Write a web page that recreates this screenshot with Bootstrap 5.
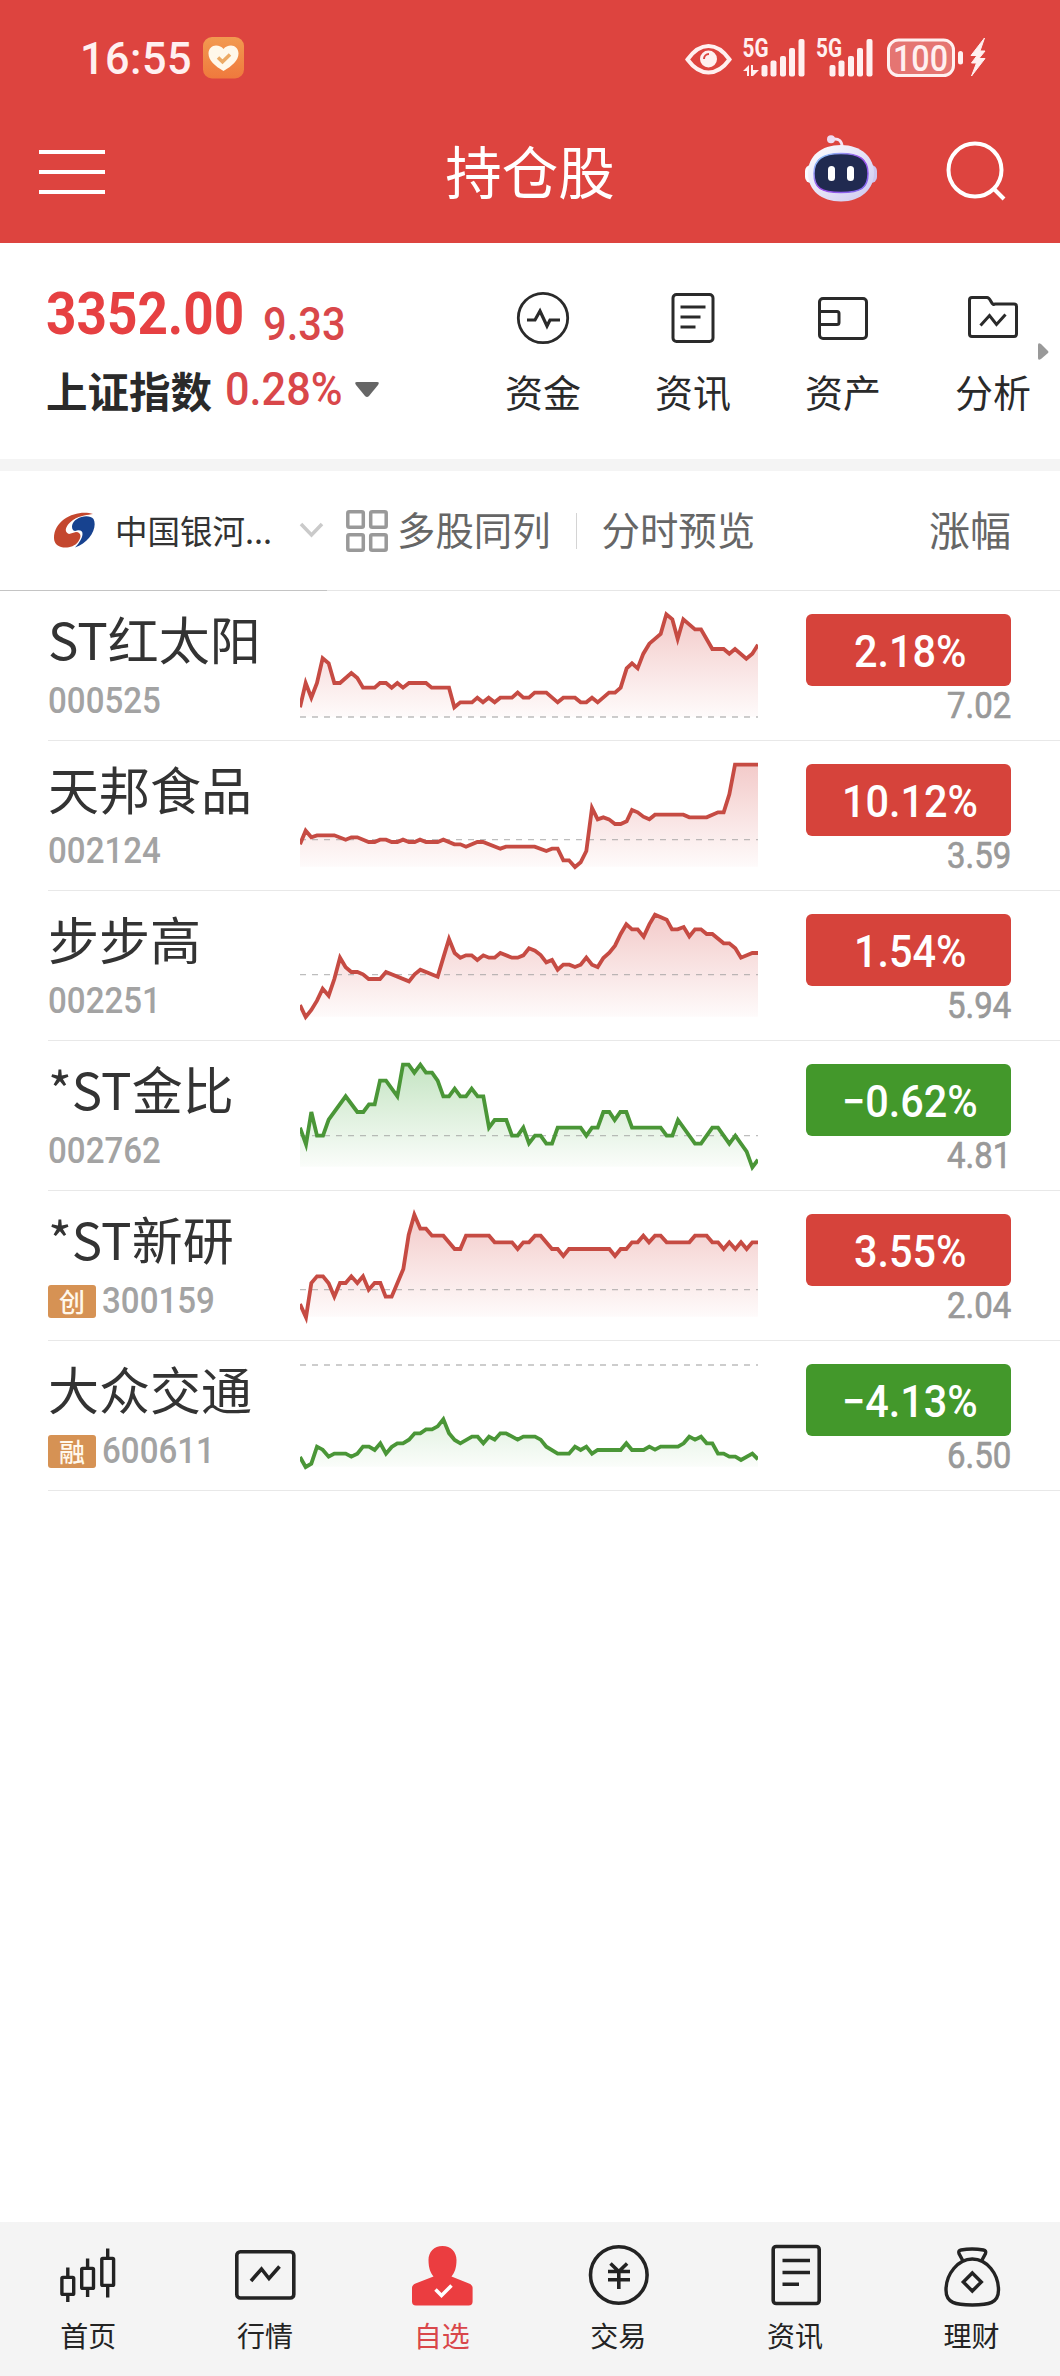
<!DOCTYPE html>
<html lang="zh-CN">
<head>
<meta charset="utf-8">
<meta name="viewport" content="width=device-width, initial-scale=1">
<title>持仓股</title>
<link href="https://cdn.jsdelivr.net/npm/bootstrap@5.3.0/dist/css/bootstrap.min.css" rel="stylesheet">
<style>
body{font-family:"Noto Sans CJK SC",sans-serif;color:#2a2a2a;background:#fff;min-height:2376px;overflow-x:hidden}
svg{display:block;flex:none}
.din{font-family:Roboto,sans-serif;font-weight:500;display:inline-block;white-space:nowrap;transform:scaleX(.92);transform-origin:left center}
.topbar{background:#dd443f;height:243px;color:#fff}
.status{height:116px;padding:0 74px 0 80px;color:#fff0f0}
.clock{font-size:45px;line-height:60px;width:123px;transform:scaleX(.96);letter-spacing:.5px}
.titlebar{height:112px;padding:0 54px 0 39px}
.title-text{font-size:56.5px;line-height:80px;font-weight:400;margin:-6px 0 0 15px}
.side{width:220px}
.quote{height:216px;padding-left:46px}
.idx-main{font-size:60px;line-height:64px;font-weight:700;color:#e64042;width:217px;transform:scaleX(.885)}
.idx-sub{font-size:45.5px;line-height:50px;color:#d9474a;transform:scaleX(.915)}
.idx-pct{width:130px;transform:scaleX(.95)}
.idx-name{font-size:41.5px;line-height:56px;font-weight:700;width:179px}
.shortcut{width:150px;padding-top:48px}
.shortcut span{font-size:38px;line-height:50px;margin-top:15px}
.more{width:12px;margin-left:-30px;padding-top:99px}
.band{height:12px;background:#f4f4f4}
.filter{height:120px;border-bottom:1px solid #e6e6e6;color:#666;font-size:38.4px}
.filter .opt{margin-top:-3px}
.broker{width:327px;height:120px;border-bottom:1px solid #c4c4c4;color:#333;font-size:32.5px;padding-left:54px}
.sep{width:1px;height:36px;background:#d4d4d4;margin:0 25px 0 25px}
.stock{height:150px;margin-left:48px;border-bottom:1px solid #e8e8e8}
.who{width:252px;padding-top:17px}
.sname{font-size:51px;line-height:60px;color:#333;white-space:nowrap}
.code{font-size:37px;line-height:38px;color:#a3a3a3;transform:scaleX(.895)}
.codeline{margin-top:14px;height:38px}
.tagbox{width:48px;height:33px;background:#d69254;border-radius:3px;color:#fff8ec;font-size:26px;line-height:31px;font-weight:500;text-align:center;margin-right:6px}
.result{width:205px;margin-left:48px;padding-top:23px}
.pct{height:72px;border-radius:6px;background:#d6433b;color:#fff;font-size:45px;line-height:67px;text-align:center;padding-left:3px}
.pct.down{background:#43982b}
.pct .din{transform-origin:center}
.price{font-size:37px;line-height:38px;color:#999;text-align:right;margin-top:-3px}
.price .din{transform:scaleX(.89);transform-origin:right center;font-weight:400;-webkit-text-stroke:.7px #999}
.tabs{height:154px;background:#f4f4f4;padding-top:18px}
.tabs a{color:#232323;text-decoration:none;font-size:28px;line-height:36px}
.tabs a.on{color:#d9474a}
.tabs span{margin-top:7px}
</style>
<script src="https://cdn.jsdelivr.net/npm/bootstrap@5.3.0/dist/js/bootstrap.bundle.min.js"></script>
</head>
<body class="d-flex flex-column">
<header class="topbar">
  <div class="status d-flex justify-content-between">
    <div class="d-flex align-items-start" style="padding-top:29px">
      <span class="din clock">16:55</span>
      <svg width="41" height="42" viewBox="0 0 41 42" style="margin-top:8px"><defs><linearGradient id="og" x2="0" y2="1"><stop stop-color="#f29a50"/><stop offset="1" stop-color="#ef793d"/></linearGradient></defs><rect width="41" height="41.500" rx="9" fill="url(#og)"/><path d="M20.500 34C12 29 5.500 23.500 5.500 16.500C5.500 11.500 9 8.500 13 8.500C16 8.500 19 9.800 20.500 12C22 9.800 25 8.500 28 8.500C32 8.500 35.500 11.500 35.500 16.500C35.500 23.500 29 29 20.500 34Z" fill="#fff8ea"/><path d="M15 20.500l4.500 4.300 7.500-7.300" fill="none" stroke="#ecaa65" stroke-width="3.500"/></svg>
    </div>
    <svg width="301" height="54" viewBox="685 27 301 54" fill="#fff0f0" style="margin-top:27px">
      <path d="M687.500 59.500Q697 46 708.500 46T729.500 59.500Q720 72.500 708.500 72.500T687.500 59.500Z" fill="none" stroke="#fff0f0" stroke-width="4"/><circle cx="708.500" cy="59" r="8.500"/><path d="M704 59a5 5 0 0 1 5-5" stroke="#dd443f" stroke-width="2" fill="none"/>
      <g font-family="Roboto,sans-serif" font-weight="700" font-size="25"><text x="742.500" y="57" textLength="26" lengthAdjust="spacingAndGlyphs">5G</text><text x="816" y="57" textLength="26" lengthAdjust="spacingAndGlyphs">5G</text></g>
      <path d="M743 71l6-6v11h-2v-5zM751 65h2v5h6l-6 6h-2z"/>
      <g id="bars"><rect x="761.500" y="65" width="6" height="11.500" rx="2"/><rect x="770.500" y="60.500" width="6" height="16" rx="2"/><rect x="780" y="56" width="6" height="20.500" rx="2"/><rect x="789" y="48" width="6" height="28.500" rx="2"/><rect x="798.500" y="39" width="6" height="37.500" rx="2"/></g>
      <use href="#bars" x="68"/>
      <rect x="888.500" y="40" width="65" height="35.500" rx="10" fill="#e57572" stroke="#fff0f0" stroke-width="3"/>
      <text x="893" y="70.500" font-family="Roboto,sans-serif" font-weight="500" font-size="36" textLength="55" lengthAdjust="spacingAndGlyphs">100</text>
      <rect x="958" y="51" width="5" height="13.500" rx="2.500"/><path d="M984.500 38L971 55.500h6L971.500 63h5L971.500 76 985 58.500h-6l6-7.500h-5z" stroke="#fff0f0" stroke-width="1"/>
    </svg>
  </div>
  <div class="titlebar d-flex justify-content-between align-items-center">
    <div class="side"><svg width="66" height="44" fill="#fff"><rect width="66" height="4"/><rect y="20" width="66" height="4"/><rect y="40" width="66" height="4"/></svg></div>
    <div class="title-text">持仓股</div>
    <div class="side d-flex justify-content-between align-items-start" style="padding-left:19px;margin-top:-7px">
      <svg width="72" height="67" viewBox="0 0 72 67"><defs><linearGradient id="rb" x2="1" y2="1"><stop stop-color="#fff"/><stop offset="1" stop-color="#ccc7f0"/></linearGradient><linearGradient id="rv" x2="1" y2="1"><stop stop-color="#8adfff"/><stop offset=".5" stop-color="#9d4be8"/><stop offset="1" stop-color="#7c6ff0"/></linearGradient></defs><path d="M28 4q9-1 9 8" fill="none" stroke="#f6e4f4" stroke-width="3"/><circle cx="26" cy="4.200" r="4" fill="#eedcf2"/><rect y="30" width="12" height="18" rx="6" fill="#fafaff"/><rect x="60" y="30" width="12" height="18" rx="6" fill="#cdc5ee"/><path d="M36 10C56 10 69 22 69 38S56 66.500 36 66.500 3 55 3 38 16 10 36 10Z" fill="url(#rb)"/><path d="M36 18.500C54 18.500 63 24 63 38.500S56 57.500 36 57.500 9 53 9 38.500 18 18.500 36 18.500Z" fill="#202a50" stroke="url(#rv)" stroke-width="1.500"/><rect x="23" y="31" width="7" height="15" rx="3.500" fill="#fff"/><rect x="42" y="31" width="7" height="15" rx="3.500" fill="#fff"/></svg>
      <svg width="60" height="62" viewBox="0 0 60 62" fill="none" stroke="#fff" stroke-width="4" style="margin-top:4px"><circle cx="29" cy="31" r="26.500"/><path d="M47 49l11 11"/></svg>
    </div>
  </div>
</header>

<section class="quote d-flex">
  <div style="width:422px;padding-top:39px">
    <div class="d-flex align-items-end"><span class="din idx-main">3352.00</span><span class="din idx-sub" style="margin-bottom:-4px">9.33</span></div>
    <div class="d-flex align-items-center" style="margin-top:16px"><span class="idx-name">上证指数</span><span class="din idx-sub idx-pct">0.28%</span><svg width="24" height="16" fill="#666"><path d="M2 0h20q3 0 1 3L14 14q-2 2-4 0L1 3Q-1 0 2 0z"/></svg></div>
  </div>
  <div class="shortcut flex-shrink-0 d-flex flex-column align-items-center">
    <svg width="60" height="60" viewBox="0 0 60 60" fill="none" stroke="#2a2a2a" stroke-width="2.800"><circle cx="30" cy="27" r="24.700"/><path d="M14 29h8l5-9 7 15 3-6h10" stroke-width="3.200"/></svg><span>资金</span></div>
  <div class="shortcut flex-shrink-0 d-flex flex-column align-items-center">
    <svg width="60" height="60" viewBox="0 0 60 60" fill="none" stroke="#2a2a2a" stroke-width="3"><rect x="10" y="3.500" width="40" height="47" rx="3.500"/><path d="M17.500 16h25M17.500 26h20M17.500 36h15"/></svg><span>资讯</span></div>
  <div class="shortcut flex-shrink-0 d-flex flex-column align-items-center">
    <svg width="60" height="60" viewBox="0 0 60 60" fill="none" stroke="#2a2a2a" stroke-width="3"><rect x="6.500" y="7.500" width="47" height="40" rx="3.500"/><path d="M6.500 20.500H24q2 0 2 2v9q0 2-2 2H6.500"/></svg><span>资产</span></div>
  <div class="shortcut flex-shrink-0 d-flex flex-column align-items-center">
    <svg width="60" height="60" viewBox="0 0 60 60" fill="none" stroke="#2a2a2a" stroke-width="3"><path d="M9 6.500H24q2 0 4 4t4 2.500H51q2.500 0 2.500 2.500V43q0 2.500-2.500 2.500H9Q6.500 45.500 6.500 43V9Q6.500 6.500 9 6.500z"/><path d="M17.500 34.500l9-10 7 9 9-10" /></svg><span>分析</span></div>
  <div class="more flex-shrink-0"><svg width="11" height="20" fill="#999"><path d="M0 3Q0 0 3 2l7 7q1 1 0 2l-7 6q-3 2-3-1z"/></svg></div>
</section>
<div class="band"></div>

<section class="filter d-flex align-items-center">
  <div class="broker flex-shrink-0 d-flex align-items-center">
    <svg width="42" height="36" viewBox="0 0 42 36"><path d="M39 2C25-3 0 6 0 26C0 38 18 38 24 30C28 25 27 20 22 20L15 22C9 20 12 13 19 8C27 3 34 3 39 2Z" fill="#c4472e"/><path d="M18 14C19 5 35 1 39.500 7C44 16 35 31 21 35.500C29 27 32 17 23 18.500C19 20 18 17 18 14Z" fill="#17428f"/></svg>
    <span style="margin-left:19px;width:184px">中国银河...</span>
    <svg width="25" height="18" fill="none" stroke="#cacaca" stroke-width="3.500"><path d="M2 3l10.500 11L23 3"/></svg>
  </div>
  <svg width="42" height="42" viewBox="0 0 42 42" fill="none" stroke="#999" stroke-width="3.500" style="margin-left:19px"><rect x="1.800" y="1.800" width="15.500" height="15.500" rx="1.500"/><rect x="24.700" y="1.800" width="15.500" height="15.500" rx="1.500"/><rect x="1.800" y="24.700" width="15.500" height="15.500" rx="1.500"/><rect x="24.700" y="24.700" width="15.500" height="15.500" rx="1.500"/></svg>
  <span class="opt" style="margin-left:9px">多股同列</span><i class="sep"></i><span class="opt">分时预览</span>
  <span class="opt ms-auto" style="margin-right:49px;font-size:41px">涨幅</span>
</section>

<main id="list" class="flex-grow-1"></main>

<nav class="tabs d-flex">
  <a href="#" class="col-2 d-flex flex-column align-items-center"><svg width="80" height="70" fill="none" stroke="#232323" stroke-width="3.400"><rect x="13.900" y="37.400" width="11.800" height="17" rx="1"/><rect x="33.700" y="28.400" width="11.800" height="20" rx="1"/><rect x="53.800" y="18.400" width="11.800" height="27" rx="1"/><path d="M19.800 27.500v10M19.800 55v7M39.600 18.500v10M39.600 49v8M59.700 8.500v10M59.700 46v11.500"/></svg><span>首页</span></a>
  <a href="#" class="col-2 d-flex flex-column align-items-center"><svg width="80" height="70" fill="none" stroke="#232323" stroke-width="3.600"><rect x="11.800" y="11.800" width="57" height="46.200" rx="3.500"/><path d="M26 41l10.500-12 7.500 9.500 10.500-12"/></svg><span>行情</span></a>
  <a href="#" class="on col-2 d-flex flex-column align-items-center"><svg width="80" height="70"><path d="M40.500 6C49 6 54.500 12 54.500 20C54.500 28 52.500 33 49.500 36.500L67 43.500Q70.600 45 70.600 48V61.500Q70.600 65.500 66.600 65.500H14Q10 65.500 10 61.500V48Q10 45 13.500 43.500L31.500 36.500C28.500 33 26.500 28 26.500 20C26.500 12 32 6 40.500 6Z" fill="#eb3d40"/><path d="M33.500 49.500l6 6L49.500 45.500" fill="none" stroke="#fff" stroke-width="3.500"/></svg><span>自选</span></a>
  <a href="#" class="col-2 d-flex flex-column align-items-center"><svg width="80" height="70" fill="none" stroke="#232323" stroke-width="3.600"><circle cx="40.800" cy="35" r="28.300"/><path d="M32.500 23.500l8.300 8 8.300-8M30 31.500h22M30 39.700h22M40.800 31v18"/></svg><span>交易</span></a>
  <a href="#" class="col-2 d-flex flex-column align-items-center"><svg width="80" height="70" fill="none" stroke="#232323" stroke-width="3.600"><rect x="18.200" y="6.500" width="46" height="57" rx="3"/><path d="M27.500 20.500H55M27.500 32.500H55M27.500 44.300H44"/></svg><span>资讯</span></a>
  <a href="#" class="col-2 d-flex flex-column align-items-center"><svg width="80" height="70" fill="none" stroke="#232323" stroke-width="3.400"><path d="M40.300 19C55 19 66.500 34 66.500 50C66.500 63 57 65 40.300 65S14 63 14 50C14 34 26 19 40.300 19Z"/><path d="M31 21l-4-7.500q-1-3 2-3.500 11-2 22.500 0 3 .5 2 3.500L49.500 21"/><path d="M40.300 33l9 9-9 9-9-9z"/></svg><span>理财</span></a>
</nav>

<script>
// x,y pairs of each intraday line, in thirds of a pixel
const stocks=[
 {n:"ST红太阳",c:"000525",p:"2.18%",v:"7.02",d:381,l:"60,352 77,279 94,323 111,279 128,205 146,220 163,279 180,279 214,249 232,264 249,293 284,293 300,279 318,279 335,293 352,279 369,293 387,279 438,279 455,293 507,293 523,352 541,337 576,337 592,323 609,337 626,323 644,337 661,323 696,323 713,308 730,323 747,323 764,308 799,308 833,337 850,323 885,323 902,337 919,337 936,323 953,337 987,308 1005,308 1022,293 1040,235 1056,220 1073,235 1090,191 1108,161 1142,132 1159,73 1177,88 1193,147 1210,88 1245,118 1263,118 1297,177 1331,177 1348,191 1365,177 1399,206 1417,191 1434,164"},
 {n:"天邦食品",c:"002124",p:"10.12%",v:"3.59",d:299,l:"60,313 77,272 94,292 111,286 163,286 197,299 214,292 232,292 266,306 284,306 300,299 318,299 335,306 352,306 369,299 387,306 404,306 420,299 438,306 473,306 490,299 523,313 541,313 558,320 592,306 609,306 661,326 678,320 764,320 799,333 816,326 833,326 850,361 867,361 885,381 902,367 919,333 936,204 953,238 970,232 987,238 1005,252 1022,252 1040,244 1056,210 1073,217 1090,230 1108,238 1125,224 1210,224 1228,232 1280,232 1314,217 1331,217 1348,163 1365,74 1434,74"},
 {n:"步步高",c:"002251",p:"1.54%",v:"5.94",d:254,l:"60,345 77,381 94,360 111,332 128,296 146,317 163,267 180,203 197,232 214,246 232,246 249,253 266,267 300,267 318,246 387,274 404,253 421,239 473,260 490,203 507,147 524,189 541,203 558,196 575,196 592,210 610,196 627,203 644,203 661,189 696,203 713,203 730,196 747,175 765,182 782,195 799,217 816,210 833,239 850,224 868,224 885,231 902,224 919,203 936,224 953,231 970,204 988,188 1005,167 1022,132 1039,103 1056,118 1073,118 1091,140 1108,103 1125,74 1160,89 1176,118 1193,118 1211,111 1228,139 1245,118 1263,118 1280,132 1297,132 1331,160 1348,160 1366,175 1383,203 1417,189 1434,189"},
 {n:"*ST金比",c:"002762",p:"−0.62%",v:"4.81",g:1,d:287,l:"60,263 78,313 94,216 111,287 129,287 146,239 197,169 232,216 250,216 267,193 284,193 300,122 318,122 352,169 369,74 386,74 403,98 421,74 438,98 456,98 473,122 490,169 507,169 524,146 541,169 558,169 575,146 593,169 610,169 627,263 644,240 679,240 696,287 713,287 730,263 747,310 765,287 782,287 799,311 816,311 833,263 902,263 919,287 936,263 953,263 970,216 988,216 1004,240 1021,216 1039,216 1056,263 1142,263 1160,287 1177,287 1194,240 1245,311 1263,311 1297,263 1314,263 1348,311 1366,287 1400,335 1417,382 1434,359"},
 {n:"*ST新研",c:"300159",t:"创",p:"3.55%",v:"2.04",d:299,l:"60,342 78,382 94,279 111,259 129,259 146,280 163,320 180,279 197,279 214,259 232,279 249,259 266,299 284,279 301,279 317,320 335,320 370,237 386,135 403,74 421,116 438,116 456,137 490,137 524,177 541,177 558,137 627,137 644,157 696,157 713,177 730,157 747,157 765,137 782,137 816,177 833,177 850,198 867,177 988,177 1005,198 1022,177 1039,177 1056,157 1073,157 1090,137 1107,157 1125,137 1142,137 1160,157 1228,157 1245,137 1280,137 1297,157 1314,157 1331,177 1348,157 1366,177 1383,157 1400,177 1417,157 1434,157"},
 {n:"大众交通",c:"600611",t:"融",p:"−4.13%",v:"6.50",g:1,d:75,l:"60,351 77,381 94,371 111,320 128,329 146,350 163,341 197,341 214,350 232,341 249,320 267,320 284,330 301,310 318,341 335,321 352,310 369,310 387,299 404,280 421,280 438,268 456,268 473,259 490,238 507,280 524,300 541,310 576,290 593,290 610,310 627,290 644,299 661,280 678,280 713,299 730,290 765,290 782,299 799,320 833,341 867,341 885,320 902,330 919,320 936,341 953,330 1022,330 1039,310 1056,330 1091,330 1108,320 1125,329 1142,320 1194,320 1211,310 1228,290 1245,299 1263,290 1280,310 1297,310 1314,341 1331,341 1348,350 1366,350 1383,360 1417,341 1434,358"}
];
document.getElementById("list").innerHTML=stocks.map((s,i)=>{
 const col=s.g?"#4a9637":"#c64b43", f=s.g?"#8cca88":"#e79694";
 return `<div class="stock d-flex"><div class="who flex-shrink-0"><div class="sname">${s.n}</div>
 <div class="codeline d-flex align-items-center">${s.t?`<span class="tagbox">${s.t}</span>`:""}<span class="din code">${s.c}</span></div></div>
 <svg width="458" height="149" viewBox="60 3 1374 447"><defs><linearGradient id="g${i}" gradientUnits="userSpaceOnUse" x1="0" x2="0" y1="74" y2="381"><stop stop-color="${f}" stop-opacity=".5"/><stop offset="1" stop-color="${f}" stop-opacity=".04"/></linearGradient></defs>
 <polygon points="60,380 ${s.l} 1434,380" fill="url(#g${i})"/><path d="M60 ${s.d}H1434" stroke="#999" stroke-opacity=".65" stroke-width="${s.d==381||s.d==75?5:3.5}" stroke-dasharray="18 18"/>
 <polyline points="${s.l}" fill="none" stroke="${col}" stroke-width="11.500"/></svg>
 <div class="result flex-shrink-0"><div class="pct ${s.g?"down":""}"><span class="din">${s.p}</span></div><div class="price"><span class="din">${s.v}</span></div></div></div>`}).join("");
</script>
</body>
</html>
